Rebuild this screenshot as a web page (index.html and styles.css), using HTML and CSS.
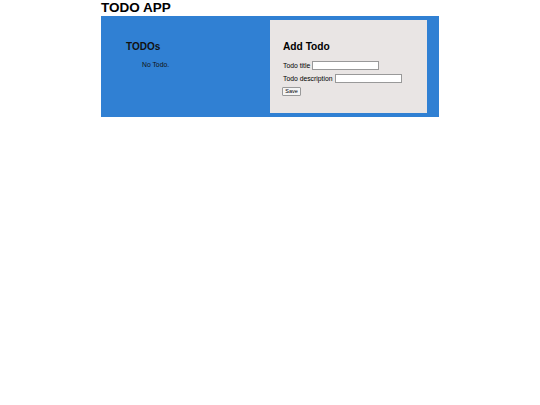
FILE: index.html
```html
<!DOCTYPE html>
<html>
<head>
<meta charset="utf-8">
<link rel="stylesheet" href="styles.css">
</head>
<body>
<div class="app">
  <h1 class="title">TODO APP</h1>
  <div class="board">
    <div class="list">
      <h2 class="list-title">TODOs</h2>
      <p class="empty">No Todo.</p>
    </div>
    <div class="form">
      <h2 class="form-title">Add Todo</h2>
      <div class="row"><label class="label">Todo title</label><input class="field" type="text"></div>
      <div class="row"><label class="label">Todo description</label><input class="field" type="text"></div>
      <button class="save">Save</button>
    </div>
  </div>
</div>
</body>
</html>
```
FILE: styles.css
```css
html, body { margin: 0; padding: 0; background: #fff; }
body { font-family: "Liberation Sans", Arial, sans-serif; color: #000; }
.app { width: 338px; margin: 0 auto; }
.title { margin: 0; font-size: 13.5px; line-height: 16px; font-weight: bold; }
.board { display: flex; background: #3080d3; padding: 4px 12px 4px 0; height: 93px; }
.list { flex: 1; padding: 21px 0 0 25px; }
.list-title { margin: 0; font-size: 10px; line-height: 12px; font-weight: bold; color: #111; }
.empty { margin: 7px 0 0 16px; font-size: 6.8px; line-height: 9px; color: #111; }
.form { width: 144px; background: #e9e5e4; padding: 20px 0 0 13px; }
.form-title { margin: 0 0 8px; font-size: 10.2px; line-height: 13px; font-weight: bold; }
.row { display: flex; align-items: center; margin-bottom: 4px; height: 9px; }
.label { font-size: 6.8px; line-height: 9px; margin-right: 2px; }
.field { width: 67px; height: 9px; padding: 0; border: 1px solid #999; box-sizing: border-box; background: #fff; }
.save { display: block; font-family: inherit; font-size: 5.5px; height: 9px; width: 19px; padding: 0; margin-left: -1px; border: 1px solid #999; border-radius: 1px; background: #f4f4f4; line-height: 7px; }
```
